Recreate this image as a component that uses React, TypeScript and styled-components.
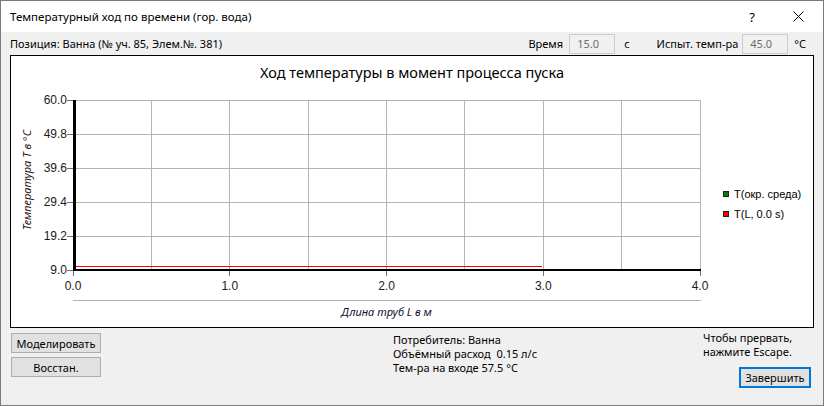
import React from 'react';
import styled, { createGlobalStyle } from 'styled-components';

const GlobalStyle = createGlobalStyle`
  html, body {
    margin: 0;
    padding: 0;
    background: #ffffff;
  }
  body {
    font-family: "Noto Sans", "Open Sans", sans-serif;
  }
`;

const UI_FONT = `"Noto Sans", "Open Sans", sans-serif`;
const CHART_FONT = `"Liberation Sans", Arial, sans-serif`;

const Window = styled.div`
  width: 824px;
  height: 406px;
  box-sizing: border-box;
  border: 1px solid #7a7a7a;
  background: #f0f0f0;
  display: flex;
  flex-direction: column;
  font-family: ${UI_FONT};
  font-size: 11px;
  color: #000;
`;

const TitleBar = styled.div`
  height: 31px;
  background: #ffffff;
  display: flex;
  align-items: center;
  padding: 0 2px 0 9px;
`;

const TitleText = styled.div`
  flex: 1;
  font-size: 11.5px;
`;

const CaptionButton = styled.div`
  width: 46px;
  height: 31px;
  display: flex;
  align-items: center;
  justify-content: center;
  font-size: 13px;
`;

const InfoRow = styled.div`
  height: 23px;
  display: flex;
  align-items: center;
  padding: 0 17px 0 9px;
`;

const InfoText = styled.span<{ $gap?: number }>`
  margin-left: ${(p) => p.$gap ?? 0}px;
  white-space: nowrap;
`;

const Spacer = styled.div`
  flex: 1;
`;

const ReadOnlyField = styled.div<{ $gap?: number }>`
  width: 46px;
  height: 20px;
  box-sizing: border-box;
  margin-left: ${(p) => p.$gap ?? 0}px;
  border: 1px solid #cccccc;
  background: #f0f0f0;
  color: #6d6d6d;
  padding-left: 7px;
  line-height: 18px;
`;

const ChartPanel = styled.div`
  margin: 0 9px;
  height: 273px;
  box-sizing: border-box;
  border: 1px solid #000;
  background: #ffffff;
  display: flex;
  flex-direction: column;
`;

const ChartTitle = styled.div`
  height: 34px;
  line-height: 32px;
  text-align: center;
  font-size: 14.5px;
`;

const ChartBody = styled.div`
  display: flex;
  flex: 1;
`;

const Legend = styled.div`
  padding: 94px 0 0 12px;
  display: flex;
  flex-direction: column;
  font-family: ${CHART_FONT};
  font-size: 11px;
`;

const LegendItem = styled.div`
  height: 20px;
  display: flex;
  align-items: center;
  gap: 5px;
`;

const LegendSwatch = styled.span<{ $color: string }>`
  width: 6px;
  height: 6px;
  box-sizing: border-box;
  border: 1px solid #222;
  background: ${(p) => p.$color};
`;

const Footer = styled.div`
  flex: 1;
  display: grid;
  grid-template-columns: 382px 310px 1fr;
  padding: 5px 0 0 10px;
`;

const ButtonColumn = styled.div`
  display: flex;
  flex-direction: column;
  gap: 4px;
`;

const PushButton = styled.button<{ $primary?: boolean }>`
  width: ${(p) => (p.$primary ? 72 : 90)}px;
  height: ${(p) => (p.$primary ? 21 : 20)}px;
  box-sizing: border-box;
  padding: 0;
  font-family: ${UI_FONT};
  font-size: 11px;
  color: #000;
  background: #e1e1e1;
  border: ${(p) => (p.$primary ? '2px solid #0078d7' : '1px solid #adadad')};
`;

const TextLines = styled.div`
  line-height: 14px;
  white-space: pre;
`;

const EndColumn = styled.div`
  display: flex;
  flex-direction: column;
  align-items: flex-start;
  line-height: 14px;
  margin-top: -2px;
`;

const FinishRow = styled.div`
  align-self: stretch;
  display: flex;
  justify-content: flex-end;
  padding-right: 12px;
  margin-top: 8px;
`;

// plot geometry in svg coordinates
const PL = 62;
const PR = 689;
const PT = 10;
const PB = 180;
const yTicks = ['60.0', '49.8', '39.6', '29.4', '19.2', '9.0'];
const xTicks = ['0.0', '1.0', '2.0', '3.0', '4.0'];

function Chart() {
  const xStep = (PR - PL) / 8;
  const yStep = (PB - PT) / 5;
  return (
    <svg width="700" height="236" viewBox="0 0 700 236" style={{ display: 'block' }}>
      <g stroke="#b4b4b4" strokeWidth="1" shapeRendering="crispEdges">
        {Array.from({ length: 9 }).map((_, i) => (
          <line key={'v' + i} x1={PL + i * xStep} x2={PL + i * xStep} y1={PT} y2={PB} />
        ))}
        {yTicks.map((_, j) => (
          <line key={'h' + j} x1={PL} x2={PR} y1={PT + j * yStep} y2={PT + j * yStep} />
        ))}
        <line x1={PL} x2={PR + 1} y1={210.5} y2={210.5} />
      </g>
      <g stroke="#707070" strokeWidth="1" shapeRendering="crispEdges">
        {yTicks.map((_, j) => (
          <line key={'yt' + j} x1={PL - 6} x2={PL} y1={PT + j * yStep} y2={PT + j * yStep} />
        ))}
        {xTicks.map((_, i) => (
          <line key={'xt' + i} x1={PL + i * 2 * xStep} x2={PL + i * 2 * xStep} y1={PB} y2={PB + 6} />
        ))}
      </g>
      <line x1={PL} x2={PL + 469} y1={176.5} y2={176.5} stroke="#ff0000" strokeWidth="1" />
      <line x1={PL + 1.5} x2={PL + 1.5} y1={PT} y2={PB + 1} stroke="#000" strokeWidth="3" />
      <line x1={PL} x2={PR + 1} y1={180} y2={180} stroke="#000" strokeWidth="2" />
      <g fontFamily={CHART_FONT} fontSize="12" fill="#1a1a1a">
        {yTicks.map((t, j) => (
          <text key={'yl' + j} x={PL - 6} y={PT + j * yStep + 4} textAnchor="end">
            {t}
          </text>
        ))}
        {xTicks.map((t, i) => (
          <text key={'xl' + i} x={PL + i * 2 * xStep} y={200} textAnchor="middle">
            {t}
          </text>
        ))}
      </g>
      <text
        x={(PL + PR) / 2}
        y={226}
        textAnchor="middle"
        fontFamily={UI_FONT}
        fontStyle="italic"
        fontSize="11"
        fill="#101030"
      >
        Длина труб L в м
      </text>
      <text
        transform="translate(20 90) rotate(-90)"
        textAnchor="middle"
        fontFamily={UI_FONT}
        fontStyle="italic"
        fontSize="11"
        fill="#301010"
      >
        Температура T в °C
      </text>
    </svg>
  );
}

export default function App() {
  return (
    <>
      <GlobalStyle />
      <Window>
        <TitleBar>
          <TitleText>Температурный ход по времени (гор. вода)</TitleText>
          <CaptionButton>?</CaptionButton>
          <CaptionButton>
            <svg width="11" height="11" viewBox="0 0 11 11">
              <path d="M0.5 0.5 L10.5 10.5 M10.5 0.5 L0.5 10.5" stroke="#000" strokeWidth="1" />
            </svg>
          </CaptionButton>
        </TitleBar>
        <InfoRow>
          <InfoText>Позиция: Ванна (№ уч. 85, Элем.№. 381)</InfoText>
          <Spacer />
          <InfoText>Время</InfoText>
          <ReadOnlyField $gap={6}>15.0</ReadOnlyField>
          <InfoText $gap={9}>с</InfoText>
          <InfoText $gap={27}>Испыт. темп-ра</InfoText>
          <ReadOnlyField $gap={4}>45.0</ReadOnlyField>
          <InfoText $gap={6}>°C</InfoText>
        </InfoRow>
        <ChartPanel>
          <ChartTitle>Ход температуры в момент процесса пуска</ChartTitle>
          <ChartBody>
            <Chart />
            <Legend>
              <LegendItem>
                <LegendSwatch $color="#008000" />
                T(окр. среда)
              </LegendItem>
              <LegendItem>
                <LegendSwatch $color="#ff0000" />
                T(L, 0.0 s)
              </LegendItem>
            </Legend>
          </ChartBody>
        </ChartPanel>
        <Footer>
          <ButtonColumn>
            <PushButton>Моделировать</PushButton>
            <PushButton>Восстан.</PushButton>
          </ButtonColumn>
          <TextLines>
            {'Потребитель: Ванна\nОбъёмный расход  0.15 л/с\nТем-ра на входе 57.5 °C'}
          </TextLines>
          <EndColumn>
            <span>Чтобы прервать,</span>
            <span>нажмите Escape.</span>
            <FinishRow>
              <PushButton $primary>Завершить</PushButton>
            </FinishRow>
          </EndColumn>
        </Footer>
      </Window>
    </>
  );
}
